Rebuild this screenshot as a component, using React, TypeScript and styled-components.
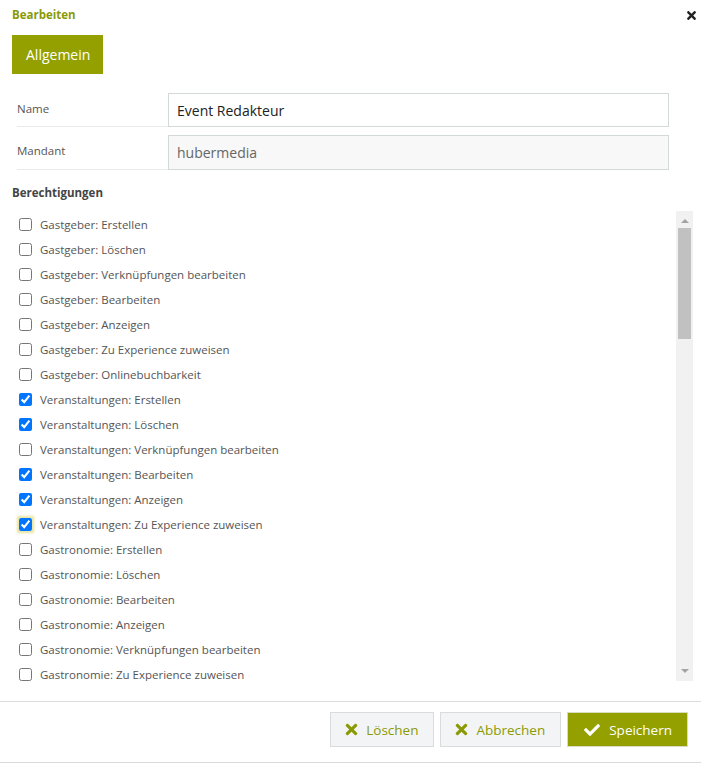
import React, { useCallback, useEffect, useRef, useState } from "react";
import styled, { createGlobalStyle } from "styled-components";
import { FaTimes, FaCheck } from "react-icons/fa";

const GlobalStyle = createGlobalStyle`
  html, body { margin: 0; padding: 0; background: #fff; }
  body { font-family: "Open Sans", "Noto Sans", Arial, sans-serif; color: #555; }
  * { box-sizing: border-box; }
`;

const OLIVE = "#94a000";
const TRACK = "#f1f1f1";
const ARROW = "#a3a3a3";

const Dialog = styled.div`
  width: 701px;
  display: flex;
  flex-direction: column;
`;

const Header = styled.div`
  display: flex;
  align-items: center;
  justify-content: space-between;
  padding: 7px 3px 0 12px;
  height: 23px;
`;

const Title = styled.h1`
  margin: 0;
  font-size: 11.5px;
  line-height: 16px;
  font-weight: 700;
  color: #8a9a05;
`;

const CloseButton = styled.button`
  border: none;
  background: none;
  padding: 0;
  color: #222;
  display: flex;
  align-items: center;
  font-size: 13px;
  cursor: pointer;
`;

const Body = styled.div`
  padding: 12px 8px 0 12px;
  display: flex;
  flex-direction: column;
`;

const TabBar = styled.div`
  display: flex;
`;

const TabButton = styled.button`
  height: 39px;
  padding: 0 13px 0 14px;
  border: none;
  background: ${OLIVE};
  color: #fff;
  font-family: inherit;
  font-size: 14px;
  cursor: pointer;
`;

const Form = styled.div`
  margin: 19px 24px 0 5px;
  display: flex;
  flex-direction: column;
  gap: 8px;
`;

const FormRow = styled.div`
  display: flex;
  align-items: stretch;
`;

const Label = styled.label`
  width: 151px;
  flex: none;
  display: flex;
  align-items: center;
  padding-bottom: 3px;
  font-size: 11.5px;
  color: #555;
  border-bottom: 1px solid #e8ebeb;
`;

const Input = styled.input<{ $readOnly?: boolean }>`
  flex: 1;
  height: ${(p) => (p.$readOnly ? "35px" : "34px")};
  border: 1px solid #d3d8d8;
  padding: 0 8px;
  font-family: inherit;
  font-size: 14px;
  color: ${(p) => (p.$readOnly ? "#666" : "#222")};
  background: ${(p) => (p.$readOnly ? "#f8f8f8" : "#fff")};
  outline: none;
`;

const SectionTitle = styled.h2`
  margin: 14px 0 0 0;
  font-size: 11.5px;
  line-height: 17px;
  font-weight: 700;
  color: #444;
`;

const ListFrame = styled.div`
  margin-top: 10px;
  height: 470px;
  display: flex;
`;

const ListViewport = styled.div`
  flex: 1;
  padding-top: 1px;
  overflow-y: scroll;
  scrollbar-width: none;
  &::-webkit-scrollbar { display: none; }
`;

const ScrollRail = styled.div`
  width: 17px;
  flex: none;
  background: ${TRACK};
  display: flex;
  flex-direction: column;
`;

const RailArrow = styled.div<{ $dir: "up" | "down" }>`
  height: 17px;
  flex: none;
  display: flex;
  justify-content: center;
  align-items: ${(p) => (p.$dir === "up" ? "flex-end" : "flex-start")};
  padding: ${(p) => (p.$dir === "up" ? "0 0 5px" : "5px 0 0")};
  &::before {
    content: "";
    width: 0;
    height: 0;
    border-left: 4px solid transparent;
    border-right: 4px solid transparent;
    ${(p) =>
      p.$dir === "up"
        ? `border-bottom: 4px solid ${ARROW};`
        : `border-top: 4px solid ${ARROW};`}
  }
`;

const RailTrack = styled.div`
  flex: 1;
  padding: 0 2px;
  display: flex;
  flex-direction: column;
`;

const Thumb = styled.div`
  background: #c1c1c1;
  flex: none;
`;

const Item = styled.label`
  display: flex;
  align-items: center;
  gap: 8px;
  height: 25px;
  padding-left: 7px;
  font-size: 11.5px;
  color: #555;
  cursor: pointer;
`;

const Check = styled.input<{ $focused?: boolean }>`
  margin: 0;
  width: 13px;
  height: 13px;
  flex: none;
  ${(p) =>
    p.$focused
      ? "box-shadow: 0 0 2px 2px rgba(230, 225, 150, 0.9); border-radius: 2px;"
      : ""}
`;

const Footer = styled.div`
  margin-top: 20px;
  border-top: 1px solid #dcdcdc;
  border-bottom: 1px solid #d6dada;
  padding: 10px 13px 15px 0;
  display: flex;
  justify-content: flex-end;
  gap: 6px;
`;

const Button = styled.button<{ $primary?: boolean }>`
  height: 35px;
  display: flex;
  align-items: center;
  gap: ${(p) => (p.$primary ? "9px" : "6px")};
  padding: 0 15px 0 ${(p) => (p.$primary ? "16px" : "12px")};
  font-family: inherit;
  font-size: 13.5px;
  cursor: pointer;
  border: 1px solid ${(p) => (p.$primary ? "#d8dcc0" : "#d9dcdc")};
  background: ${(p) => (p.$primary ? OLIVE : "#f3f4f5")};
  color: ${(p) => (p.$primary ? "#fff" : "#8a9a05")};
  svg { font-size: ${(p) => (p.$primary ? "16px" : "17px")}; flex: none; }
`;

type Perm = { label: string; checked?: boolean; focused?: boolean };

const groups: [string, string[]][] = [
  ["Gastgeber", ["Erstellen", "Löschen", "Verknüpfungen bearbeiten", "Bearbeiten", "Anzeigen", "Zu Experience zuweisen", "Onlinebuchbarkeit"]],
  ["Veranstaltungen", ["Erstellen", "Löschen", "Verknüpfungen bearbeiten", "Bearbeiten", "Anzeigen", "Zu Experience zuweisen"]],
  ["Gastronomie", ["Erstellen", "Löschen", "Bearbeiten", "Anzeigen", "Verknüpfungen bearbeiten", "Zu Experience zuweisen"]],
  ["Infrastruktur", ["Erstellen", "Löschen", "Bearbeiten", "Anzeigen", "Verknüpfungen bearbeiten", "Zu Experience zuweisen"]],
  ["Touren", ["Erstellen", "Löschen", "Bearbeiten", "Anzeigen", "Verknüpfungen bearbeiten", "Zu Experience zuweisen"]],
  ["Pauschalen", ["Erstellen", "Löschen", "Bearbeiten", "Anzeigen", "Verknüpfungen bearbeiten", "Zu Experience zuweisen"]],
  ["Experiences", ["Erstellen", "Löschen", "Bearbeiten", "Anzeigen", "Verknüpfungen bearbeiten"]],
  ["Orte", ["Erstellen", "Löschen", "Bearbeiten", "Anzeigen", "Verknüpfungen bearbeiten"]],
  ["Medien", ["Erstellen", "Löschen", "Bearbeiten", "Anzeigen", "Verknüpfungen bearbeiten"]],
  ["Angebote", ["Erstellen", "Löschen", "Bearbeiten", "Anzeigen", "Verknüpfungen bearbeiten"]],
  ["Schnee", ["Erstellen", "Löschen", "Bearbeiten", "Anzeigen", "Verknüpfungen bearbeiten"]],
  ["Benutzer", ["Erstellen", "Löschen", "Bearbeiten", "Anzeigen", "Passwort zurücksetzen"]],
  ["Rollen", ["Erstellen", "Löschen", "Bearbeiten", "Anzeigen", "Verknüpfungen bearbeiten"]],
  ["Mandanten", ["Anzeigen", "Bearbeiten"]],
];

const checkedSet = new Set([
  "Veranstaltungen: Erstellen",
  "Veranstaltungen: Löschen",
  "Veranstaltungen: Bearbeiten",
  "Veranstaltungen: Anzeigen",
  "Veranstaltungen: Zu Experience zuweisen",
]);

const perms: Perm[] = groups.flatMap(([g, actions]) =>
  actions.map((a) => {
    const label = `${g}: ${a}`;
    return {
      label,
      checked: checkedSet.has(label),
      focused: label === "Veranstaltungen: Zu Experience zuweisen",
    };
  })
);

const TRACK_HEIGHT = 470 - 34;

function PermissionList() {
  const ref = useRef<HTMLDivElement>(null);
  const [thumb, setThumb] = useState({ size: 112, offset: 0 });

  const update = useCallback(() => {
    const el = ref.current;
    if (!el) return;
    const ratio = el.clientHeight / el.scrollHeight;
    const size = Math.max(20, Math.round(TRACK_HEIGHT * ratio));
    const max = el.scrollHeight - el.clientHeight;
    const offset = max > 0 ? Math.round((el.scrollTop / max) * (TRACK_HEIGHT - size)) : 0;
    setThumb({ size, offset });
  }, []);

  useEffect(() => {
    update();
  }, [update]);

  return (
    <ListFrame>
      <ListViewport ref={ref} onScroll={update}>
        {perms.map((p) => (
          <Item key={p.label}>
            <Check type="checkbox" defaultChecked={p.checked} $focused={p.focused} />
            {p.label}
          </Item>
        ))}
      </ListViewport>
      <ScrollRail aria-hidden>
        <RailArrow $dir="up" />
        <RailTrack>
          <Thumb style={{ height: thumb.size, marginTop: thumb.offset }} />
        </RailTrack>
        <RailArrow $dir="down" />
      </ScrollRail>
    </ListFrame>
  );
}

export default function App() {
  return (
    <>
      <GlobalStyle />
      <Dialog>
        <Header>
          <Title>Bearbeiten</Title>
          <CloseButton aria-label="Schließen">
            <FaTimes />
          </CloseButton>
        </Header>
        <Body>
          <TabBar>
            <TabButton>Allgemein</TabButton>
          </TabBar>
          <Form>
            <FormRow>
              <Label>Name</Label>
              <Input defaultValue="Event Redakteur" />
            </FormRow>
            <FormRow>
              <Label>Mandant</Label>
              <Input $readOnly readOnly defaultValue="hubermedia" />
            </FormRow>
          </Form>
          <SectionTitle>Berechtigungen</SectionTitle>
          <PermissionList />
        </Body>
        <Footer>
          <Button>
            <FaTimes />
            Löschen
          </Button>
          <Button>
            <FaTimes />
            Abbrechen
          </Button>
          <Button $primary>
            <FaCheck />
            Speichern
          </Button>
        </Footer>
      </Dialog>
    </>
  );
}
